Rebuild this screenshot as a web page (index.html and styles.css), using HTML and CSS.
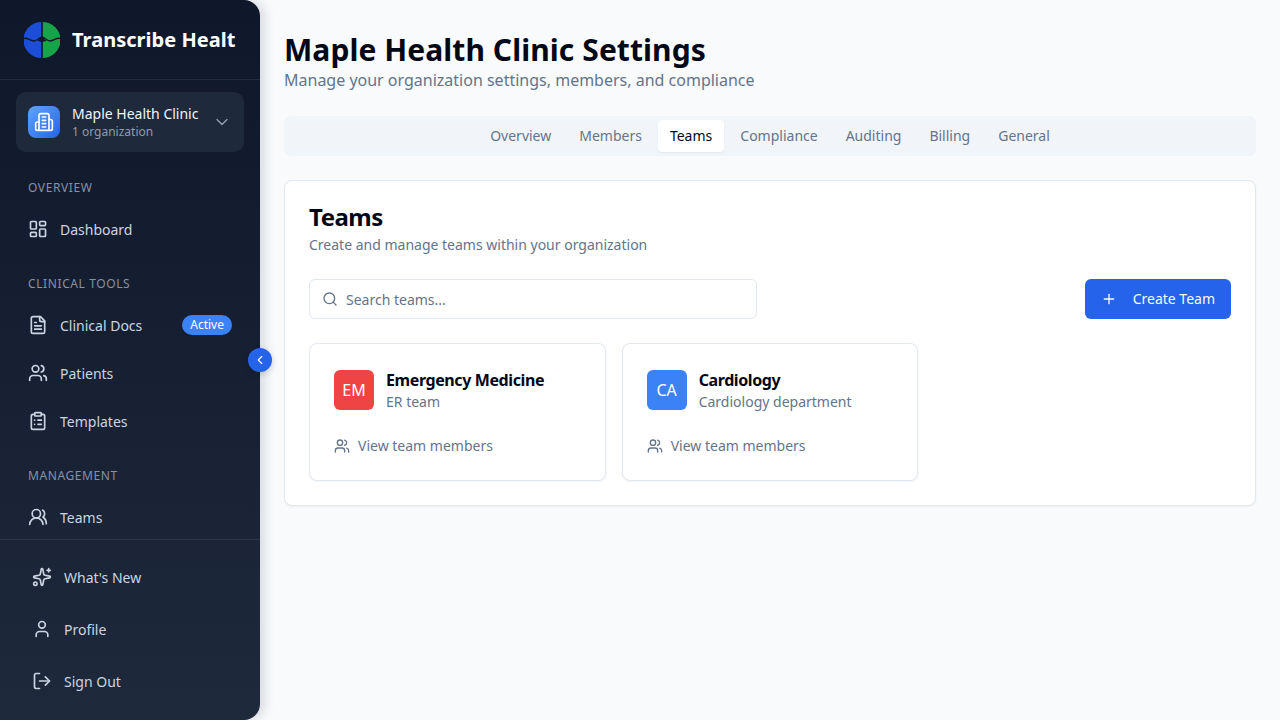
FILE: index.html
```html
<!DOCTYPE html>
<html lang="en">
  <head>
    <meta charset="UTF-8" />
    <meta name="viewport" content="width=device-width, initial-scale=1.0" />
    <title>Maple Health Clinic Settings</title>
    <link rel="stylesheet" href="styles.css">
  </head>
  <body>
    <div class="app">
      <!-- sidebar -->
      <aside class="sidebar">
        <div class="brand">
          <svg class="brand-logo" viewBox="0 0 36 36">
            <path d="M17.500 0a18 18 0 0 0 0 36z" fill="#1d4ed8" />
            <path d="M18.500 0a18 18 0 0 1 0 36z" fill="#16a34a" />
            <path d="M18 0v36" stroke="#0f172a" stroke-width="1.200" fill="none" />
            <path d="M0 16.500c3-1.500 6 2.500 10 2.500 3 0 5-3.500 8-4 3 .5 5 4 8 4 4 0 7-4 10-2.500" stroke="#0f172a" stroke-width="1.300" fill="none" />
            <path d="M13 18.500c2 0 3.500-3.500 5-3.500s3 3.500 5 3.500c-2 .5-3.500 1.500-5 1.500s-3-1-5-1.500z" fill="#0f172a" />
          </svg>
          <div class="brand-name">Transcribe Health</div>
        </div>

        <div class="org-switch">
          <div class="org-icon">
            <svg class="icon" viewBox="0 0 24 24"><path d="M6 22V4a2 2 0 0 1 2-2h8a2 2 0 0 1 2 2v18Z" /><path d="M6 12H4a2 2 0 0 0-2 2v6a2 2 0 0 0 2 2h2" /><path d="M18 9h2a2 2 0 0 1 2 2v9a2 2 0 0 1-2 2h-2" /><path d="M10 6h4" /><path d="M10 10h4" /><path d="M10 14h4" /><path d="M10 18h4" /></svg>
          </div>
          <div class="org-text">
            <div class="org-name">Maple Health Clinic</div>
            <div class="org-count">1 organization</div>
          </div>
          <svg class="icon org-chevron" viewBox="0 0 24 24"><path d="m6 9 6 6 6-6" /></svg>
        </div>

        <nav class="nav">
          <div class="nav-label">Overview</div>
          <a class="nav-item">
            <svg class="icon" viewBox="0 0 24 24"><rect x="3" y="3" width="7" height="9" rx="1" /><rect x="14" y="3" width="7" height="5" rx="1" /><rect x="14" y="12" width="7" height="9" rx="1" /><rect x="3" y="16" width="7" height="5" rx="1" /></svg>
            <span>Dashboard</span>
          </a>

          <div class="nav-label">Clinical Tools</div>
          <a class="nav-item">
            <svg class="icon" viewBox="0 0 24 24"><path d="M15 2H6a2 2 0 0 0-2 2v16a2 2 0 0 0 2 2h12a2 2 0 0 0 2-2V7Z" /><path d="M14 2v4a2 2 0 0 0 2 2h4" /><path d="M10 9H8" /><path d="M16 13H8" /><path d="M16 17H8" /></svg>
            <span>Clinical Docs</span>
            <span class="badge">Active</span>
          </a>
          <a class="nav-item">
            <svg class="icon" viewBox="0 0 24 24"><path d="M16 21v-2a4 4 0 0 0-4-4H6a4 4 0 0 0-4 4v2" /><circle cx="9" cy="7" r="4" /><path d="M22 21v-2a4 4 0 0 0-3-3.870" /><path d="M16 3.130a4 4 0 0 1 0 7.750" /></svg>
            <span>Patients</span>
          </a>
          <a class="nav-item">
            <svg class="icon" viewBox="0 0 24 24"><rect x="8" y="2" width="8" height="4" rx="1" /><path d="M16 4h2a2 2 0 0 1 2 2v14a2 2 0 0 1-2 2H6a2 2 0 0 1-2-2V6a2 2 0 0 1 2-2h2" /><path d="M12 11h4" /><path d="M12 16h4" /><path d="M8 11h.01" /><path d="M8 16h.01" /></svg>
            <span>Templates</span>
          </a>

          <div class="nav-label">Management</div>
          <a class="nav-item">
            <svg class="icon" viewBox="0 0 24 24"><path d="M18 21a8 8 0 0 0-16 0" /><circle cx="10" cy="8" r="5" /><path d="M22 20c0-3.370-2-6.500-4-8a5 5 0 0 0-.45-8.300" /></svg>
            <span>Teams</span>
          </a>
        </nav>

        <div class="sidebar-footer">
          <a class="footer-item">
            <svg class="icon" viewBox="0 0 24 24"><path d="M11.017 2.814a1 1 0 0 1 1.966 0l1.051 5.558a2 2 0 0 0 1.594 1.594l5.558 1.051a1 1 0 0 1 0 1.966l-5.558 1.051a2 2 0 0 0-1.594 1.594l-1.051 5.558a1 1 0 0 1-1.966 0l-1.051-5.558a2 2 0 0 0-1.594-1.594l-5.558-1.051a1 1 0 0 1 0-1.966l5.558-1.051a2 2 0 0 0 1.594-1.594z" /><path d="M20 2v4" /><path d="M22 4h-4" /><circle cx="4" cy="20" r="2" /></svg>
            <span>What's New</span>
          </a>
          <a class="footer-item">
            <svg class="icon" viewBox="0 0 24 24"><path d="M19 21v-2a4 4 0 0 0-4-4H9a4 4 0 0 0-4 4v2" /><circle cx="12" cy="7" r="4" /></svg>
            <span>Profile</span>
          </a>
          <a class="footer-item">
            <svg class="icon" viewBox="0 0 24 24"><path d="M9 21H5a2 2 0 0 1-2-2V5a2 2 0 0 1 2-2h4" /><path d="m16 17 5-5-5-5" /><path d="M21 12H9" /></svg>
            <span>Sign Out</span>
          </a>
        </div>

        <button class="collapse-btn">
          <svg class="icon" viewBox="0 0 24 24"><path d="m15 18-6-6 6-6" /></svg>
        </button>
      </aside>

      <!-- main content -->
      <main class="main">
        <h1>Maple Health Clinic Settings</h1>
        <p class="subtitle">Manage your organization settings, members, and compliance</p>

        <div class="tabs">
          <a class="tab">Overview</a>
          <a class="tab">Members</a>
          <a class="tab tab-active">Teams</a>
          <a class="tab">Compliance</a>
          <a class="tab">Auditing</a>
          <a class="tab">Billing</a>
          <a class="tab">General</a>
        </div>

        <section class="panel">
          <h2>Teams</h2>
          <p class="panel-desc">Create and manage teams within your organization</p>

          <div class="toolbar">
            <div class="search">
              <svg class="icon" viewBox="0 0 24 24"><path d="m21 21-4.340-4.340" /><circle cx="11" cy="11" r="8" /></svg>
              <span>Search teams...</span>
            </div>
            <button class="create-btn">
              <svg class="icon" viewBox="0 0 24 24"><path d="M5 12h14" /><path d="M12 5v14" /></svg>
              <span>Create Team</span>
            </button>
          </div>

          <div class="team-grid">
            <div class="team-card">
              <div class="team-head">
                <div class="team-avatar avatar-red">EM</div>
                <div>
                  <div class="team-name">Emergency Medicine</div>
                  <div class="team-desc">ER team</div>
                </div>
              </div>
              <div class="team-link">
                <svg class="icon" viewBox="0 0 24 24"><path d="M16 21v-2a4 4 0 0 0-4-4H6a4 4 0 0 0-4 4v2" /><circle cx="9" cy="7" r="4" /><path d="M22 21v-2a4 4 0 0 0-3-3.870" /><path d="M16 3.130a4 4 0 0 1 0 7.750" /></svg>
                <span>View team members</span>
              </div>
            </div>
            <div class="team-card">
              <div class="team-head">
                <div class="team-avatar avatar-blue">CA</div>
                <div>
                  <div class="team-name">Cardiology</div>
                  <div class="team-desc">Cardiology department</div>
                </div>
              </div>
              <div class="team-link">
                <svg class="icon" viewBox="0 0 24 24"><path d="M16 21v-2a4 4 0 0 0-4-4H6a4 4 0 0 0-4 4v2" /><circle cx="9" cy="7" r="4" /><path d="M22 21v-2a4 4 0 0 0-3-3.870" /><path d="M16 3.130a4 4 0 0 1 0 7.750" /></svg>
                <span>View team members</span>
              </div>
            </div>
          </div>
        </section>
      </main>
    </div>
  </body>
</html>
```

FILE: styles.css
```css
* {
  box-sizing: border-box;
}
html,
body {
  height: 100%;
}
body {
  margin: 0;
  overflow: hidden;
  font-family: "Noto Sans", sans-serif;
  font-size: 14px;
  color: #020817;
  background: #f8fafc;
}
.app {
  display: flex;
  height: 720px;
}
.icon {
  width: 20px;
  height: 20px;
  flex-shrink: 0;
  fill: none;
  stroke: currentColor;
  stroke-width: 2;
  stroke-linecap: round;
  stroke-linejoin: round;
}

/* sidebar */
.sidebar {
  position: relative;
  width: 260px;
  flex-shrink: 0;
  display: flex;
  flex-direction: column;
  background: linear-gradient(180deg, #0f172a 0%, #1e293b 100%);
  border-radius: 0 16px 16px 0;
  box-shadow: 4px 0 12px rgba(15, 23, 42, 0.15);
  color: #cbd5e1;
}
.brand {
  display: flex;
  align-items: center;
  gap: 12px;
  height: 80px;
  padding: 0 24px;
  border-bottom: 1px solid rgba(148, 163, 184, 0.15);
}
.brand-logo {
  width: 36px;
  height: 36px;
  flex-shrink: 0;
}
.brand-name {
  font-size: 20px;
  font-weight: 700;
  letter-spacing: 0.03px;
  color: #fff;
  white-space: nowrap;
  overflow: hidden;
}
.org-switch {
  display: flex;
  align-items: center;
  gap: 12px;
  height: 60px;
  margin: 12px 16px 0;
  padding: 0 12px;
  background: #1e293b;
  border-radius: 10px;
}
.org-icon {
  width: 32px;
  height: 32px;
  display: flex;
  align-items: center;
  justify-content: center;
  flex-shrink: 0;
  color: #fff;
  background: linear-gradient(135deg, #60a5fa, #2563eb);
  border-radius: 8px;
}
.org-text {
  flex: 1;
  min-width: 0;
}
.org-name {
  font-size: 14px;
  line-height: 20px;
  color: #f1f5f9;
  white-space: nowrap;
}
.org-count {
  font-size: 12px;
  line-height: 16px;
  color: #8e9bb0;
}
.org-chevron {
  color: #94a3b8;
  stroke-width: 1.500;
}
.nav {
  flex: 1;
  overflow: hidden;
  padding: 5px 16px 0;
}
.nav-label {
  margin: 23px 0 9px;
  padding: 0 12px;
  font-size: 12px;
  line-height: 16px;
  letter-spacing: 0.6px;
  text-transform: uppercase;
  color: #8492a6;
}
.nav-item {
  display: flex;
  align-items: center;
  gap: 12px;
  height: 48px;
  padding: 0 12px;
  color: #cbd5e1;
}
.badge {
  margin-left: auto;
  padding: 0 8px;
  font-size: 12px;
  line-height: 20px;
  color: #fff;
  background: #3b82f6;
  border-radius: 10px;
}
.sidebar-footer {
  padding: 11px 16px 13px;
  border-top: 1px solid rgba(148, 163, 184, 0.15);
}
.footer-item {
  display: flex;
  align-items: center;
  gap: 12px;
  height: 52px;
  padding: 0 16px;
  color: #cbd5e1;
}
.collapse-btn {
  position: absolute;
  top: 348px;
  right: -12px;
  width: 24px;
  height: 24px;
  display: flex;
  align-items: center;
  justify-content: center;
  padding: 0;
  border: 0;
  color: #fff;
  background: #2563eb;
  border-radius: 50%;
  box-shadow: 0 2px 6px rgba(15, 23, 42, 0.2);
}
.collapse-btn .icon {
  width: 14px;
  height: 14px;
}

/* main content */
.main {
  flex: 1;
  min-width: 0;
  padding: 32px 24px 24px;
}
h1 {
  margin: 0;
  font-size: 30px;
  line-height: 36px;
  font-weight: 700;
  letter-spacing: 0.07px;
}
.subtitle {
  margin: 0;
  font-size: 16px;
  line-height: 24px;
  color: #64748b;
}
.tabs {
  display: flex;
  justify-content: center;
  gap: 4px;
  height: 40px;
  margin-top: 24px;
  padding: 4px;
  background: #f1f5f9;
  border-radius: 6px;
}
.tab {
  padding: 0 12px;
  line-height: 32px;
  color: #64748b;
  border-radius: 4px;
}
.tab-active {
  color: #020817;
  background: #fff;
  box-shadow: 0 1px 2px rgba(0, 0, 0, 0.05);
}
.panel {
  margin-top: 24px;
  padding: 24px;
  background: #fff;
  border: 1px solid #e2e8f0;
  border-radius: 8px;
  box-shadow: 0 1px 2px rgba(0, 0, 0, 0.05);
}
h2 {
  margin: 0;
  font-size: 24px;
  line-height: 24px;
  font-weight: 700;
  letter-spacing: -0.5px;
}
.panel-desc {
  margin: 6px 0 0;
  line-height: 20px;
  color: #64748b;
}
.toolbar {
  display: flex;
  justify-content: space-between;
  margin-top: 24px;
}
.search {
  display: flex;
  align-items: center;
  gap: 8px;
  width: 448px;
  height: 40px;
  padding: 0 12px;
  color: #64748b;
  background: #fff;
  border: 1px solid #e2e8f0;
  border-radius: 6px;
}
.search .icon {
  width: 16px;
  height: 16px;
}
.create-btn {
  display: flex;
  align-items: center;
  gap: 16px;
  height: 40px;
  padding: 0 16px;
  border: 0;
  font-family: inherit;
  font-size: 14px;
  color: #f8fafc;
  background: #2563eb;
  border-radius: 6px;
}
.create-btn .icon {
  width: 16px;
  height: 16px;
}
.create-btn span {
  padding-bottom: 2px;
}
.team-grid {
  display: grid;
  grid-template-columns: repeat(3, 1fr);
  gap: 16px;
  margin-top: 24px;
}
.team-card {
  padding: 24px;
  background: #fff;
  border: 1px solid #e2e8f0;
  border-radius: 8px;
  box-shadow: 0 1px 2px rgba(0, 0, 0, 0.05);
}
.team-head {
  display: flex;
  align-items: center;
  gap: 12px;
}
.team-avatar {
  width: 40px;
  height: 40px;
  display: flex;
  align-items: center;
  justify-content: center;
  flex-shrink: 0;
  font-size: 16px;
  color: #fff;
  border-radius: 6px;
}
.avatar-red {
  background: #ef4444;
}
.avatar-blue {
  background: #3b82f6;
}
.team-name {
  font-size: 16px;
  line-height: 24px;
  font-weight: 700;
  letter-spacing: -0.4px;
}
.team-desc {
  line-height: 20px;
  color: #64748b;
}
.team-link {
  display: flex;
  align-items: center;
  gap: 8px;
  margin-top: 24px;
  line-height: 20px;
  color: #64748b;
}
.team-link .icon {
  width: 16px;
  height: 16px;
}
```
